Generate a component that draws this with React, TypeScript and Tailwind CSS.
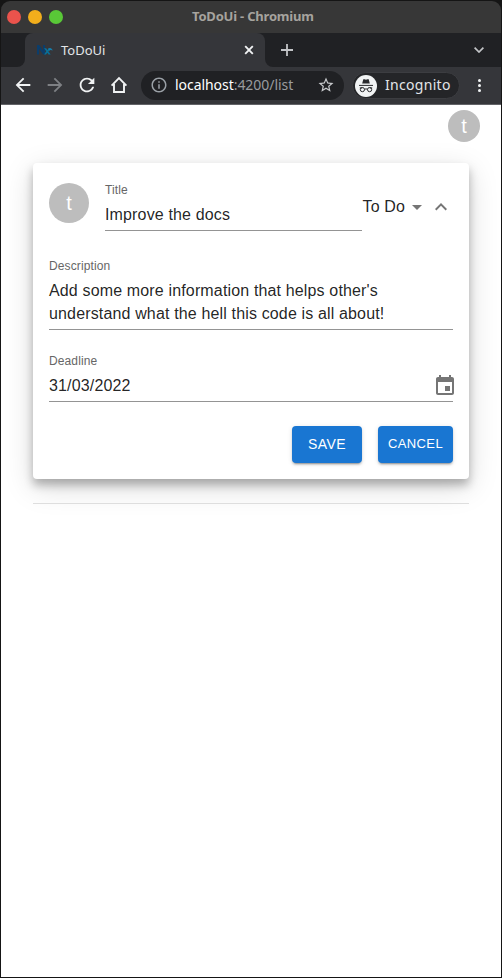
import type { ReactNode } from "react";

function Icon({ d, className }: { d: string; className: string }) {
  return (
    <svg viewBox="0 0 24 24" fill="currentColor" className={`block shrink-0 ${className}`}>
      <path d={d} />
    </svg>
  );
}

const BACK = "M20 11H7.83l5.59-5.59L12 4l-8 8 8 8 1.41-1.41L7.83 13H20v-2z";
const RELOAD =
  "M17.65 6.35C16.2 4.9 14.21 4 12 4c-4.42 0-7.99 3.58-7.99 8s3.57 8 7.99 8c3.73 0 6.84-2.55 7.73-6h-2.08c-.82 2.33-3.04 4-5.65 4-3.31 0-6-2.69-6-6s2.69-6 6-6c1.66 0 3.14.69 4.22 1.78L13 11h7V4l-2.35 2.35z";
const INFO =
  "M11 7h2v2h-2zm0 4h2v6h-2zm1-9C6.48 2 2 6.48 2 12s4.48 10 10 10 10-4.48 10-10S17.52 2 12 2zm0 18c-4.41 0-8-3.59-8-8s3.59-8 8-8 8 3.59 8 8-3.59 8-8 8z";
const STAR =
  "m22 9.24-7.19-.62L12 2 9.19 8.63 2 9.24l5.46 4.73L5.82 21 12 17.27 18.18 21l-1.63-7.03L22 9.24zM12 15.4l-3.76 2.27 1-4.28-3.32-2.88 4.38-.38L12 6.1l1.71 4.04 4.38.38-3.32 2.88 1 4.28L12 15.4z";
const CALENDAR =
  "M17 12h-5v5h5v-5zM16 1v2H8V1H6v2H5c-1.11 0-1.99.9-1.99 2L3 19c0 1.1.89 2 2 2h14c1.1 0 2-.9 2-2V5c0-1.1-.9-2-2-2h-1V1h-2zm3 18H5V8h14v11z";
const EXPAND_LESS = "m12 8-6 6 1.41 1.41L12 10.83l4.59 4.58L18 14z";

function Incognito() {
  return (
    <svg viewBox="0 0 22 22" className="block h-[22px] w-[22px] shrink-0">
      <circle cx="11" cy="11" r="11" fill="#f1f3f4" />
      <path d="M7.2 8.500 8.300 4.300h1.300l1.400.5 1.400-.5h1.300l1.100 4.200z" fill="#292a2d" />
      <path d="M4 10.400h14" stroke="#292a2d" strokeWidth="1" />
      <g fill="none" stroke="#292a2d" strokeWidth="1">
        <circle cx="7.400" cy="14.600" r="2.100" />
        <circle cx="14.600" cy="14.600" r="2.100" />
        <path d="M9.500 14.300q1.500-.9 3 0M4.800 12.900h2.600M14.600 12.900h2.600" />
      </g>
    </svg>
  );
}

function Favicon() {
  return (
    <svg viewBox="0 0 16 16" className="block h-4 w-4 shrink-0">
      <path d="M0 12.500V3h2.200l3.900 5.500V3h2v9.500H6.200L2 6.800v5.700z" fill="#0b3d6b" />
      <path d="M7 6.200h2.100l1.400 1.900 1.300-1.700h1.800l-2.200 3 2.300 3.100h-2.100l-1.300-1.800-1.300 1.800H7.100l2.200-3.200z" fill="#087099" />
      <path d="M11 6.800c2.200-1.800 3.900-.5 4.700 1.700-1.300-.7-2.600-.8-3.600.2z" fill="#167daa" />
    </svg>
  );
}

function Browser() {
  return (
    <header className="font-['Noto_Sans','Open_Sans',sans-serif]">
      <div className="relative flex h-8 items-center gap-[7px] rounded-t-[9px] bg-[#373737] pl-[6px]">
        <i className="h-[14px] w-[14px] rounded-full bg-[#ea534c]" />
        <i className="h-[14px] w-[14px] rounded-full bg-[#f2ae1c]" />
        <i className="h-[14px] w-[14px] rounded-full bg-[#59c837]" />
        <span className="absolute left-[191px] top-[6px] whitespace-nowrap text-[13px] font-bold leading-[19px] tracking-[-0.2px] text-[#a6a39e]">
          ToDoUi - Chromium
        </span>
      </div>
      <div className="flex h-[34px] bg-[#35363a]">
        <div className="w-6 rounded-br-lg bg-[#202124]" />
        <div className="h-[34px] w-60 bg-[#202124]">
          <div className="flex h-full items-center rounded-t-lg bg-[#35363a] pl-3">
            <Favicon />
            <span className="ml-2 flex-1 text-[13px] leading-[18px] tracking-normal text-[#e3e5e8]">ToDoUi</span>
            <svg viewBox="0 0 10 10" className="mr-[11px] h-[10px] w-[10px]" fill="none" stroke="#f1f3f4" strokeWidth="1.9">
              <path d="m1.200 1.200 7.600 7.600M8.800 1.200 1.200 8.800" />
            </svg>
          </div>
        </div>
        <div className="flex flex-1 items-center justify-between rounded-bl-lg bg-[#202124] pl-4 pr-[17px]">
          <svg viewBox="0 0 12 12" className="h-3 w-3" stroke="#c3c5c8" strokeWidth="1.800">
            <path d="M6 0v12M0 6h12" />
          </svg>
          <svg viewBox="0 0 10 6" className="h-[6px] w-[10px]" fill="none" stroke="#c3c5c8" strokeWidth="1.700">
            <path d="M.6.6 5 5 9.400.6" />
          </svg>
        </div>
      </div>
      <div className="flex h-[37px] items-center bg-[#35363a] pl-[11px] pr-[17px]">
        <Icon d={BACK} className="-mt-px h-[22px] w-[22px] text-[#f1f3f4]" />
        <Icon d={BACK} className="-mt-px ml-[10px] h-[22px] w-[22px] rotate-180 text-[#7e8084]" />
        <Icon d={RELOAD} className="-mt-[2px] ml-[10px] h-[22px] w-[22px] text-[#f1f3f4]" />
        <svg viewBox="0 0 18 18" className="-mt-px ml-3 h-[18px] w-[18px]" fill="none" stroke="#f1f3f4" strokeWidth="1.900">
          <path d="M1.600 9.600 9 2.200l7.400 7.400M4 8v8h10V8" />
        </svg>
        <div className="ml-[13px] flex h-[29px] w-[203px] items-center rounded-full bg-[#202124] pl-[9px] pr-[9px]">
          <Icon d={INFO} className="-mt-px h-[18px] w-[18px] text-[#9aa0a6]" />
          <span className="-mt-px ml-[7px] flex-1 whitespace-nowrap text-[14px] leading-5 tracking-[-0.05px] text-[#999b9f]">
            <span className="text-white">localhost</span>:4200/list
          </span>
          <Icon d={STAR} className="-mt-px h-[18px] w-[18px] text-[#c8cacd]" />
        </div>
        <div className="ml-[8px] flex h-[27px] w-[108px] items-center rounded-full border border-[#3c3d41] bg-[#242528] pl-[2px]">
          <Incognito />
          <span className="-mt-px ml-[8px] text-[14px] leading-5 tracking-[0.3px] text-[#e3e5e8]">Incognito</span>
        </div>
        <div className="ml-auto flex w-[10px] flex-col items-center gap-[2px]">
          <i className="h-[3px] w-[3px] rounded-full bg-[#f1f3f4]" />
          <i className="h-[3px] w-[3px] rounded-full bg-[#f1f3f4]" />
          <i className="h-[3px] w-[3px] rounded-full bg-[#f1f3f4]" />
        </div>
      </div>
      <div className="h-px bg-[#626367]" />
    </header>
  );
}

function Field({ label, className, children }: { label: string; className: string; children: ReactNode }) {
  return (
    <div className={`border-b border-[#949494] ${className}`}>
      <div className="pt-px text-[12px] leading-[17px] tracking-[0.11px] text-[#666]">{label}</div>
      {children}
    </div>
  );
}

export default function App() {
  return (
    <div className="h-[978px] w-[502px] bg-[#151515] p-px font-['Liberation_Sans',Arial,sans-serif] text-[16px] leading-[23px] tracking-[0.15px] text-[rgba(0,0,0,0.87)]">
      <Browser />
      <main className="h-[872px] overflow-hidden bg-white px-8">
        <div className="flex justify-end pt-[5px]">
          <div className="-mr-[11px] flex h-8 w-8 items-center justify-center rounded-full bg-[#bdbdbd] text-[20px] text-white">t</div>
        </div>
        <section className="mt-[21px] h-[316px] rounded bg-white px-4 pt-[18px] shadow-[0_6px_10px_rgba(0,0,0,0.27),0_8px_30px_rgba(0,0,0,0.15)]">
          <div className="flex">
            <div className="mt-[2px] flex h-10 w-10 shrink-0 items-center justify-center rounded-full bg-[#bdbdbd] text-[20px] text-white">t</div>
            <Field label="Title" className="ml-4 h-[50px] w-[257px]">
              <div className="mt-1">Improve the docs</div>
            </Field>
            <div className="flex h-[50px] items-center">
              <span className="whitespace-nowrap pl-[0.5px]">To Do</span>
              <svg viewBox="0 0 10 5" className="ml-[6.500px] mt-[2px] h-[5px] w-[10px] text-[#757575]" fill="currentColor">
                <path d="M0 0h10L5 5z" />
              </svg>
              <Icon d={EXPAND_LESS} className="ml-[7px] mt-[2px] h-6 w-6 text-[#757575]" />
            </div>
          </div>
          <Field label="Description" className="mt-[26px] h-[73px]">
            <div className="mt-1">
              Add some more information that helps other's
              <br />
              understand what the hell this code is all about!
            </div>
          </Field>
          <Field label="Deadline" className="mt-[22px] h-[50px]">
            <div className="-mr-1 mt-1 flex items-start justify-between">
              31/03/2022
              <Icon d={CALENDAR} className="h-6 w-6 text-[#757575]" />
            </div>
          </Field>
          <div className="mt-6 flex justify-end gap-4 text-white">
            <button className="h-[37px] w-[70px] rounded bg-[#1976d2] text-[14px] tracking-[0.4px] shadow-[0_3px_1px_-2px_rgba(0,0,0,0.2),0_2px_2px_0_rgba(0,0,0,0.14),0_1px_5px_0_rgba(0,0,0,0.12)]">SAVE</button>
            <button className="h-[37px] w-[75px] rounded bg-[#1976d2] pb-[2px] text-[13px] tracking-[0.4px] shadow-[0_3px_1px_-2px_rgba(0,0,0,0.2),0_2px_2px_0_rgba(0,0,0,0.14),0_1px_5px_0_rgba(0,0,0,0.12)]">CANCEL</button>
          </div>
        </section>
        <hr className="mt-6 border-t border-[#dedede]" />
      </main>
    </div>
  );
}
